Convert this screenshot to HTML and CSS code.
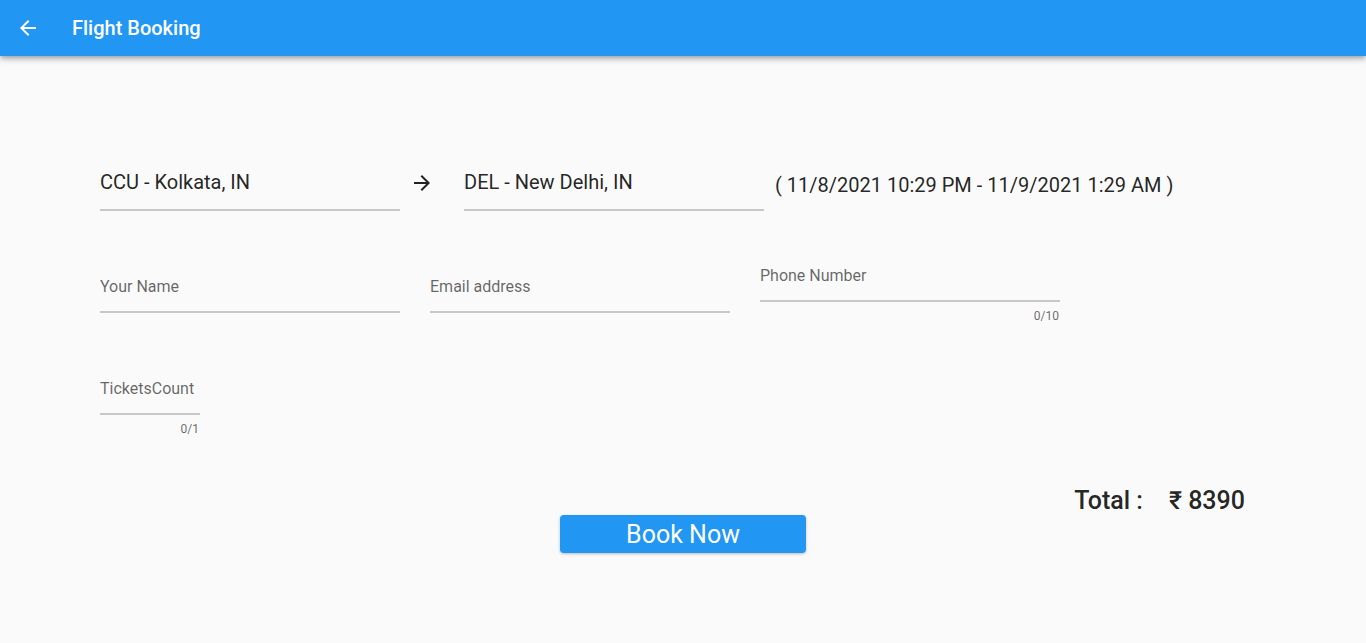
FILE: index.html
```html
<!DOCTYPE html>
<html>
<head>
<meta charset="utf-8">
<link rel="stylesheet" href="styles.css">
</head>
<body>
<header class="appbar">
  <svg class="back" width="24" height="24" viewBox="0 0 24 24"><path fill="#fff" d="M20 11H7.83l5.59-5.59L12 4l-8 8 8 8 1.41-1.41L7.83 13H20v-2z"/></svg>
  <h1 class="title">Flight Booking</h1>
</header>
<main class="content">
  <div class="row route">
    <div class="field wide value-field"><span class="value">CCU - Kolkata, IN</span></div>
    <svg class="fwd" width="24" height="24" viewBox="0 0 24 24"><path fill="#212121" d="M12 4l-1.41 1.41L16.17 11H4v2h12.17l-5.58 5.59L12 20l8-8z"/></svg>
    <div class="field wide value-field"><span class="value">DEL - New Delhi, IN</span></div>
    <div class="dates">( 11/8/2021 10:29 PM - 11/9/2021 1:29 AM )</div>
  </div>
  <div class="row inputs">
    <div class="group"><div class="field wide label-field"><span class="label">Your Name</span></div></div>
    <div class="group"><div class="field wide label-field"><span class="label">Email address</span></div></div>
    <div class="group"><div class="field wide label-field"><span class="label">Phone Number</span></div><div class="counter">0/10</div></div>
  </div>
  <div class="row inputs tickets">
    <div class="group narrow"><div class="field label-field"><span class="label">TicketsCount</span></div><div class="counter">0/1</div></div>
  </div>
  <div class="total-row">
    <span class="total-label">Total :</span>
    <span class="total-value">₹ 8390</span>
  </div>
  <div class="btn-row">
    <button class="book">Book Now</button>
  </div>
</main>
</body>
</html>
```
FILE: styles.css
```css
* { box-sizing: border-box; }
html, body { margin: 0; padding: 0; }
body {
  background: #fafafa;
  font-family: Roboto, "Noto Sans", sans-serif;
  color: rgba(0,0,0,0.87);
  width: 1366px;
  height: 643px;
  overflow: hidden;
}
.appbar {
  height: 56px;
  background: #2196f3;
  display: flex;
  align-items: center;
  padding-left: 16px;
  box-shadow: 0 2px 4px -1px rgba(0,0,0,0.2), 0 4px 5px 0 rgba(0,0,0,0.14), 0 1px 10px 0 rgba(0,0,0,0.12);
  position: relative;
  z-index: 1;
}
.back { display: block; }
.title {
  margin: 0 0 0 32px;
  font-size: 20px;
  font-weight: 500;
  color: #fff;
  letter-spacing: 0;
}
.content {
  padding: 98px 0 0 100px;
}
.row { display: flex; align-items: center; }
.route { height: 57px; }
.inputs { margin-top: 36px; gap: 30px; }
.inputs.tickets { margin-top: 37px; }
.field {
  border-bottom: 2px solid #c8c8c8;
  width: 100px;
}
.field.wide { width: 300px; }
.value-field { padding: 16px 0 15px; }
.value { display: block; font-size: 20px; line-height: 24px; }
.label-field { padding: 17px 0 12px; }
.label { display: block; font-size: 16px; line-height: 24px; color: rgba(0,0,0,0.6); }
.fwd { margin: 0 30px 0 10px; display: block; }
.dates {
  margin-left: 11px;
  font-size: 20px;
  padding-top: 4px;
}
.counter {
  margin-top: 6px;
  margin-bottom: -1px;
  font-size: 12px;
  line-height: 16px;
  text-align: right;
  color: rgba(0,0,0,0.6);
  padding-right: 1px;
}
.narrow { width: 100px; }
.total-row {
  margin-top: 51px;
  display: flex;
  justify-content: flex-end;
  padding-right: 121px;
  font-size: 25px;
  font-weight: 500;
  line-height: 28px;
  gap: 26px;
}
.btn-row {
  display: flex;
  justify-content: center;
  margin-left: -100px;
}
.book {
  width: 246px;
  height: 38px;
  background: #2196f3;
  color: #fff;
  border: none;
  border-radius: 4px;
  font-family: Roboto, sans-serif;
  font-size: 25px;
  box-shadow: 0 1px 3px rgba(0,0,0,0.25);
  padding: 0;
}
```
